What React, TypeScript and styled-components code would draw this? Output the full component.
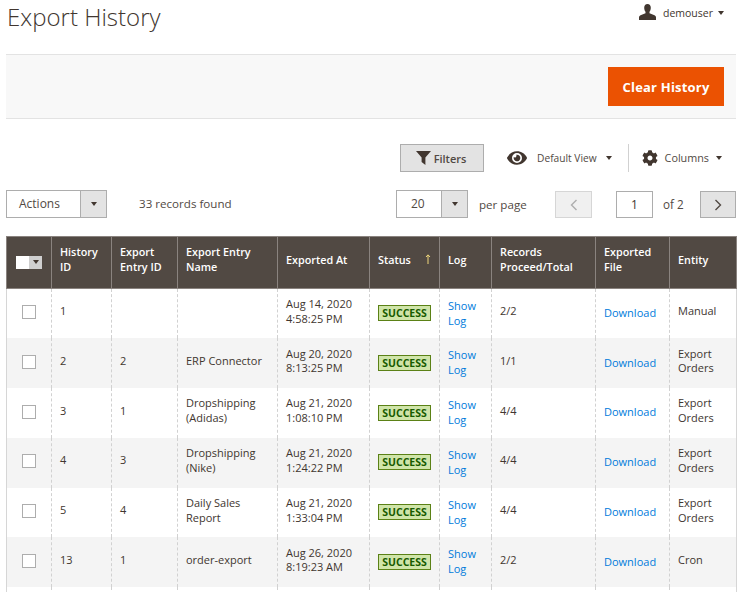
import styled, { createGlobalStyle } from "styled-components";
import { FaEye, FaCog } from "react-icons/fa";

const GlobalStyle = createGlobalStyle`
  html, body {
    margin: 0;
    padding: 0;
    background: #fff;
    overflow: hidden;
  }
  body {
    font-family: "Open Sans", "Liberation Sans", sans-serif;
    font-size: 12px;
    color: #41362f;
  }
`;

type Row = {
  id: string;
  entryId: string;
  name: string[];
  date: string[];
  records: string;
  entity: string[];
};

const rows: Row[] = [
  { id: "1", entryId: "", name: [], date: ["Aug 14, 2020", "4:58:25 PM"], records: "2/2", entity: ["Manual"] },
  { id: "2", entryId: "2", name: ["ERP Connector"], date: ["Aug 20, 2020", "8:13:25 PM"], records: "1/1", entity: ["Export", "Orders"] },
  { id: "3", entryId: "1", name: ["Dropshipping", "(Adidas)"], date: ["Aug 21, 2020", "1:08:10 PM"], records: "4/4", entity: ["Export", "Orders"] },
  { id: "4", entryId: "3", name: ["Dropshipping", "(Nike)"], date: ["Aug 21, 2020", "1:24:22 PM"], records: "4/4", entity: ["Export", "Orders"] },
  { id: "5", entryId: "4", name: ["Daily Sales", "Report"], date: ["Aug 21, 2020", "1:33:04 PM"], records: "4/4", entity: ["Export", "Orders"] },
  { id: "13", entryId: "1", name: ["order-export"], date: ["Aug 26, 2020", "8:19:23 AM"], records: "2/2", entity: ["Cron"] },
];

const Lines = ({ items }: { items: string[] }) => (
  <>
    {items.map((line) => (
      <Line key={line}>{line}</Line>
    ))}
  </>
);

export default function App() {
  return (
    <>
      <GlobalStyle />
      <Page>
        <Header>
          <Title>Export History</Title>
          <UserMenu>
            <UserIcon viewBox="0 0 17 16">
              <path d="M8.5 0C6.4 0 5.2 1.6 5.2 3.8c0 1.5.5 3 1.3 4v1.4l-5 2.1C.5 11.8 0 12.6 0 13.6V16h17v-2.4c0-1-.5-1.8-1.5-2.3l-5-2.1V7.8c.8-1 1.3-2.5 1.3-4C11.8 1.6 10.6 0 8.5 0z" />
            </UserIcon>
            <UserName>demouser</UserName>
            <Caret />
          </UserMenu>
        </Header>

        <ActionBar>
          <ClearButton>Clear History</ClearButton>
        </ActionBar>

        <ToolRow>
          <FilterButton>
            <svg width="15" height="14" viewBox="0 0 15 14" fill="#41362f">
              <path d="M0 0h15L9.4 6.4V14L5.6 11V6.4z" />
            </svg>
            Filters
          </FilterButton>
          <ViewMenu>
            <FaEye size={20} color="#41362f" />
            <ViewLabel>Default View</ViewLabel>
            <Caret />
          </ViewMenu>
          <ColumnsMenu>
            <FaCog size={16} color="#41362f" />
            <ColumnsLabel>Columns</ColumnsLabel>
            <Caret />
          </ColumnsMenu>
        </ToolRow>

        <PagerRow>
          <SelectBox>
            <SelectValue $width={73} $left={12}>Actions</SelectValue>
            <SelectArrow><Caret /></SelectArrow>
          </SelectBox>
          <RecordCount>33 records found</RecordCount>
          <Pager>
            <SelectBox>
              <SelectValue $width={44} $left={14}>20</SelectValue>
              <SelectArrow><Caret /></SelectArrow>
            </SelectBox>
            <PerPage>per page</PerPage>
            <PageButton disabled $width={37}>
              <Chevron viewBox="0 0 8 12"><path d="M6.5 1 1.5 6l5 5" /></Chevron>
            </PageButton>
            <PageInput>1</PageInput>
            <PageOf>of 2</PageOf>
            <PageButton $width={36}>
              <Chevron viewBox="0 0 8 12"><path d="M1.5 1l5 5-5 5" /></Chevron>
            </PageButton>
          </Pager>
        </PagerRow>

        <Grid>
          <colgroup>
            <col width={45} />
            <col width={60} />
            <col width={66} />
            <col width={100} />
            <col width={92} />
            <col width={70} />
            <col width={52} />
            <col width={104} />
            <col width={74} />
            <col width={67} />
          </colgroup>
          <thead>
            <tr>
              <HeadCell>
                <MassSelect>
                  <MassBox />
                  <MassArrow><Caret /></MassArrow>
                </MassSelect>
              </HeadCell>
              <HeadCell>History<br />ID</HeadCell>
              <HeadCell>Export<br />Entry ID</HeadCell>
              <HeadCell>Export Entry<br />Name</HeadCell>
              <HeadCell>Exported At</HeadCell>
              <HeadCell>
                <StatusHead>
                  Status
                  <SortArrow viewBox="0 0 6 10"><path d="M3 1v9M1 3 3 .8 5 3" /></SortArrow>
                </StatusHead>
              </HeadCell>
              <HeadCell>Log</HeadCell>
              <HeadCell>Records<br />Proceed/Total</HeadCell>
              <HeadCell>Exported<br />File</HeadCell>
              <HeadCell>Entity</HeadCell>
            </tr>
          </thead>
          <tbody>
            {rows.map((row) => (
              <BodyRow key={row.id}>
                <CheckCell><Check /></CheckCell>
                <Cell>{row.id}</Cell>
                <Cell>{row.entryId}</Cell>
                <Cell><Lines items={row.name} /></Cell>
                <Cell><Lines items={row.date} /></Cell>
                <Cell $lift={1}><Badge>SUCCESS</Badge></Cell>
                <Cell $lift={2}><LinkText>Show</LinkText><LinkText>Log</LinkText></Cell>
                <Cell>{row.records}</Cell>
                <Cell $lift={2}><LinkText>Download</LinkText></Cell>
                <Cell><Lines items={row.entity} /></Cell>
              </BodyRow>
            ))}
            <BodyRow>
              {Array.from({ length: 10 }, (_, i) => <Cell key={i} />)}
            </BodyRow>
          </tbody>
        </Grid>
      </Page>
    </>
  );
}

const Page = styled.div`
  width: 740px;
  height: 592px;
  padding: 0 4px 0 6px;
  box-sizing: border-box;
  overflow: hidden;
`;

const Header = styled.header`
  display: flex;
  justify-content: space-between;
  height: 54px;
  box-sizing: border-box;
`;

const Title = styled.h1`
  margin: 0;
  padding-left: 1px;
  font-size: 24px;
  line-height: 33px;
  font-weight: 300;
  color: #41362f;
`;

const UserMenu = styled.div`
  display: flex;
  align-items: center;
  align-self: flex-start;
  height: 26px;
  margin-right: 12px;
`;

const UserIcon = styled.svg`
  width: 17px;
  height: 16px;
  margin-top: -2px;
  fill: #41362f;
`;

const UserName = styled.span`
  margin: 0 5px 0 7px;
  font-size: 10.5px;
  color: #41362f;
`;

const Caret = styled.span`
  display: inline-block;
  width: 0;
  height: 0;
  border-left: 3px solid transparent;
  border-right: 3px solid transparent;
  border-top: 4px solid #41362f;
`;

const ActionBar = styled.div`
  display: flex;
  justify-content: flex-end;
  align-items: center;
  height: 65px;
  box-sizing: border-box;
  padding-right: 12px;
  background: #f8f8f8;
  border-top: 1px solid #e3e3e3;
  border-bottom: 1px solid #e3e3e3;
`;

const ClearButton = styled.button`
  width: 116px;
  height: 39px;
  border: 0;
  padding: 0;
  background: #eb5202;
  color: #fff;
  font-family: inherit;
  font-size: 13px;
  font-weight: 700;
  letter-spacing: 0.2px;
`;

const ToolRow = styled.div`
  display: flex;
  align-items: center;
  justify-content: flex-end;
  height: 28px;
  margin-top: 25px;
  padding-right: 14px;
`;

const FilterButton = styled.button`
  display: flex;
  align-items: center;
  justify-content: center;
  gap: 3px;
  width: 84px;
  height: 28px;
  padding: 0 2px 0 0;
  margin-right: 23px;
  background: #e3e3e3;
  border: 1px solid #adadad;
  font-family: inherit;
  font-size: 11px;
  font-weight: 600;
  color: #514943;
`;

const ViewMenu = styled.div`
  display: flex;
  align-items: center;
  height: 28px;
  padding-right: 16px;
`;

const ColumnsMenu = styled.div`
  display: flex;
  align-items: center;
  height: 28px;
  padding-left: 13px;
  border-left: 1px solid #d1d1d1;
`;

const ViewLabel = styled.span`
  margin: 0 9px 0 10px;
  font-size: 10.2px;
  color: #514943;
`;

const ColumnsLabel = styled.span`
  margin: -2px 7px 0 7px;
  font-size: 10.8px;
  color: #514943;
`;

const PagerRow = styled.div`
  display: flex;
  align-items: center;
  height: 28px;
  margin-top: 18px;
`;

const SelectBox = styled.div`
  display: flex;
  height: 28px;
  box-sizing: border-box;
  border: 1px solid #adadad;
  background: #fff;
`;

const SelectValue = styled.span<{ $width: number; $left: number }>`
  width: ${({ $width }) => $width}px;
  padding-left: ${({ $left }) => $left}px;
  box-sizing: border-box;
  font-size: 12px;
  line-height: 25px;
  color: #514943;
`;

const SelectArrow = styled.span`
  display: flex;
  align-items: center;
  justify-content: center;
  width: 25px;
  background: #e3e3e3;
  border-left: 1px solid #adadad;
`;

const RecordCount = styled.span`
  margin: -2px 0 0 32px;
  font-size: 11.6px;
  color: #514943;
`;

const Pager = styled.div`
  display: flex;
  align-items: center;
  margin-left: auto;
`;

const PerPage = styled.span`
  width: 47px;
  margin: 0 29px 0 11px;
  font-size: 11.6px;
  white-space: nowrap;
  color: #514943;
`;

const PageButton = styled.button<{ disabled?: boolean; $width: number }>`
  display: flex;
  align-items: center;
  justify-content: center;
  align-self: flex-end;
  width: ${({ $width }) => $width}px;
  height: 27px;
  padding: 0;
  background: ${({ disabled }) => (disabled ? "#f0f0f0" : "#e3e3e3")};
  border: 1px solid ${({ disabled }) => (disabled ? "#d6d6d6" : "#adadad")};
  stroke: ${({ disabled }) => (disabled ? "#adadad" : "#514943")};
`;

const Chevron = styled.svg`
  width: 8px;
  height: 12px;
  fill: none;
  stroke: inherit;
  stroke-width: 1.4;
`;

const PageInput = styled.div`
  align-self: flex-end;
  width: 37px;
  height: 27px;
  margin-left: 24px;
  box-sizing: border-box;
  border: 1px solid #adadad;
  background: #fff;
  text-align: center;
  font-size: 12px;
  line-height: 25px;
  color: #41362f;
`;

const PageOf = styled.span`
  width: 20px;
  margin: 0 17px 0 10px;
  font-size: 11.7px;
  white-space: nowrap;
  color: #514943;
`;

const Grid = styled.table`
  width: 730px;
  margin-top: 18px;
  table-layout: fixed;
  border-collapse: collapse;
`;

const HeadCell = styled.th`
  height: 52px;
  padding: 0 8px 7px;
  box-sizing: border-box;
  background: #514943;
  border: 1px solid #8a837f;
  color: #fff;
  font-size: 10.8px;
  line-height: 15px;
  font-weight: 600;
  text-align: left;
  white-space: nowrap;
`;

const StatusHead = styled.span`
  display: flex;
  align-items: center;
  justify-content: space-between;
`;

const SortArrow = styled.svg`
  width: 6px;
  height: 10px;
  margin-top: -1px;
  fill: none;
  stroke: #f0d77c;
  stroke-width: 1;
`;

const MassSelect = styled.div`
  display: flex;
  width: 26px;
  height: 13px;
  margin: 6px 0 0 1px;
`;

const MassBox = styled.span`
  width: 13px;
  background: #fff;
`;

const MassArrow = styled.span`
  display: flex;
  align-items: center;
  justify-content: center;
  width: 13px;
  background: #cfcfcf;
`;

const BodyRow = styled.tr`
  height: 49.8px;

  &:nth-child(even) {
    background: #f4f4f4;
  }
`;

const Cell = styled.td<{ $lift?: number }>`
  padding: 0 8px ${({ $lift = 4 }) => $lift}px;
  box-sizing: border-box;
  border-left: 1px dashed #d1d1d1;
  border-right: 1px dashed #d1d1d1;
  font-size: 11px;
  line-height: 14.6px;
  color: #41362f;

  &:first-child {
    border-left: 1px solid #d6d6d6;
  }

  &:last-child {
    border-right: 1px solid #d6d6d6;
  }
`;

const CheckCell = styled(Cell)`
  padding: 0 0 4px;
  text-align: center;
`;

const Check = styled.span`
  display: inline-block;
  width: 14px;
  height: 14px;
  box-sizing: border-box;
  vertical-align: middle;
  border: 1px solid #adadad;
  background: #fff;
`;

const Line = styled.div``;

const LinkText = styled.span`
  display: block;
  line-height: 15px;
  color: #007bdb;
`;

const Badge = styled.span`
  display: inline-block;
  width: 53px;
  height: 16px;
  box-sizing: border-box;
  background: #d0e5a9;
  border: 1px solid #5b8116;
  color: #185b00;
  font-size: 10.5px;
  line-height: 14px;
  font-weight: 700;
  text-align: center;
  vertical-align: middle;
`;
